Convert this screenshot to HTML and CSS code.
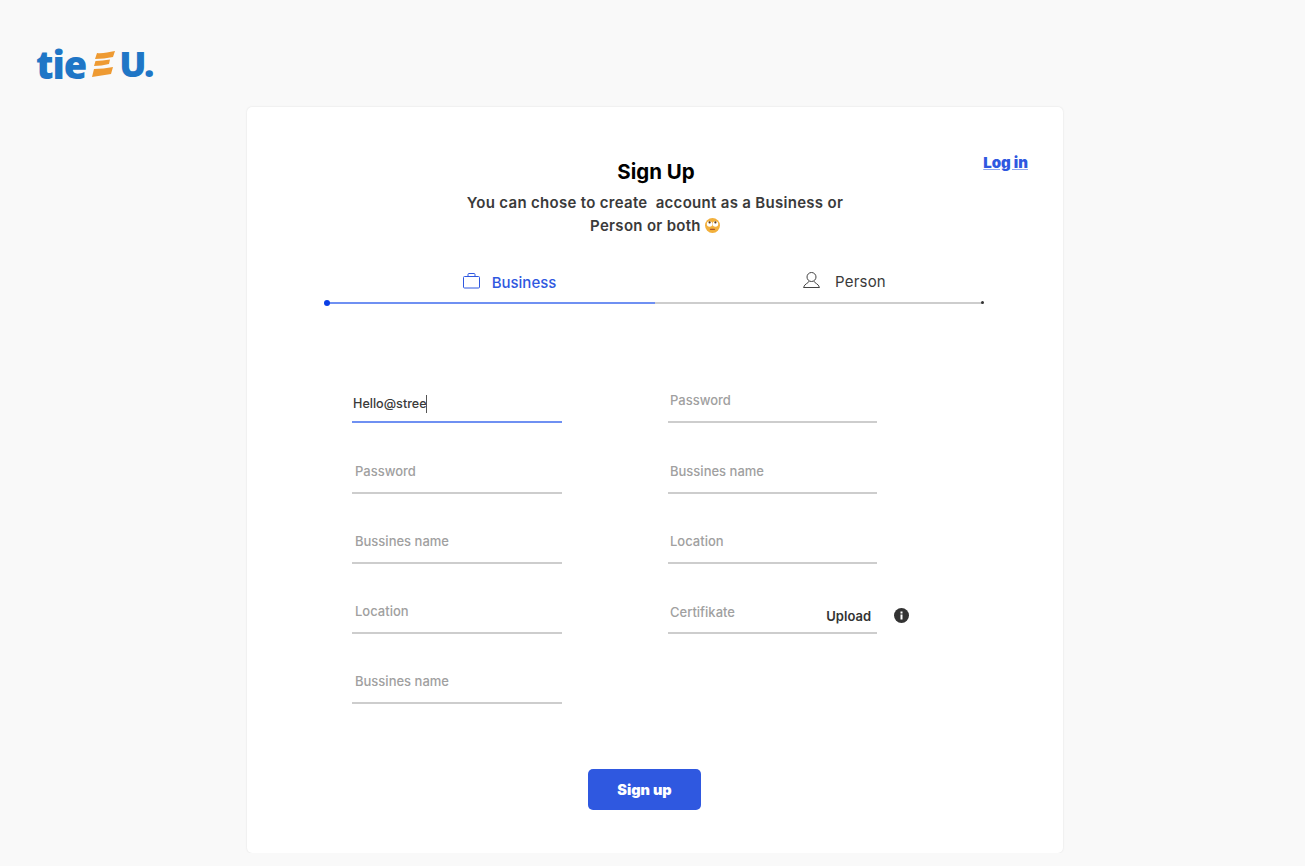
FILE: index.html
```html
<!DOCTYPE html>
<html lang="en">
<head>
    <meta charset="UTF-8">
    <meta name="viewport" content="width=device-width, initial-scale=1.0">
    <title>Sign Up</title>
    <link rel="stylesheet" href="styles.css">
</head>
<body>

<header class="site-header">
    <a class="logo" href="#">
        <span>tie</span>
        <svg class="logo-mark" width="23" height="26" viewBox="0 0 23 26">
            <path d="M5 2 C10 3 16 1 23 0 L21 6 C15 7 9 8 3 8 Z" fill="#ee9a32"/>
            <path d="M3.500 10 C8 10 13 9 18 8.500 L17 13 C12 14 7 15 2 15 Z" fill="#ee9a32"/>
            <path d="M2 18 C8 18 15 17 21 16 L19 23 C13 24 6 25 0 26 Z" fill="#ee9a32"/>
        </svg>
        <span class="logo-u">U.</span>
    </a>
</header>

<main class="card">
    <a class="login-link" href="#">Log in</a>

    <h1>Sign Up</h1>
    <p class="intro">
        You can chose to create&nbsp; account as a Business or<br>
        Person or both
        <svg class="emoji" width="15" height="15" viewBox="0 0 15 15">
            <circle cx="7.500" cy="7.500" r="7.500" fill="#f2b03c"/>
            <circle cx="4.600" cy="6" r="2.800" fill="#fff"/>
            <circle cx="10.400" cy="6" r="2.800" fill="#fff"/>
            <circle cx="4.600" cy="4.400" r="1.100" fill="#5a3a1a"/>
            <circle cx="10.400" cy="4.400" r="1.100" fill="#5a3a1a"/>
            <path d="M5.500 11.300 H9.500" stroke="#a8552a" stroke-width="1.200" stroke-linecap="round"/>
        </svg>
    </p>

    <div class="tabs">
        <div class="tab tab-active">
            <svg width="17" height="16" viewBox="0 0 17 16" fill="none" stroke="#2f58e0" stroke-width="1">
                <rect x="0.500" y="3.500" width="16" height="11.500" rx="1"/>
                <path d="M5 3.500 V1.500 Q5 0.500 6 0.500 H11 Q12 0.500 12 1.500 V3.500"/>
            </svg>
            <span>Business</span>
        </div>
        <div class="tab tab-person">
            <svg width="17" height="16" viewBox="0 0 17 16" fill="none" stroke="#444" stroke-width="1">
                <circle cx="8.500" cy="5" r="4.500"/>
                <path d="M6 9.200 C6 11 1.500 11.500 0.500 15.500 H16.500 C15.500 11.500 11 11 11 9.200"/>
            </svg>
            <span>Person</span>
        </div>
    </div>

    <form class="fields">
        <div class="field field-focus"><span class="value">Hello@stree</span><i class="caret"></i></div>
        <div class="field">Password</div>
        <div class="field">Password</div>
        <div class="field">Bussines name</div>
        <div class="field">Bussines name</div>
        <div class="field">Location</div>
        <div class="field">Location</div>
        <div class="field field-upload">
            Certifikate
            <span class="upload">Upload</span>
            <svg class="info" width="15" height="15" viewBox="0 0 15 15">
                <circle cx="7.500" cy="7.500" r="7.500" fill="#333"/>
                <rect x="6.500" y="6.500" width="2" height="5" fill="#fff"/>
                <rect x="6.500" y="3.500" width="2" height="2" fill="#fff"/>
            </svg>
        </div>
        <div class="field">Bussines name</div>
    </form>

    <div class="actions">
        <button class="signup-btn" type="button">Sign up</button>
    </div>
</main>

</body>
</html>
```

FILE: styles.css
```css
body {
    font-family: Inter, "Noto Sans", sans-serif;
    margin: 0;
    padding: 0;
    background-color: #f9f9f9;
    color: #3a3a3a;
}

.site-header {
    padding: 44px 36px 0;
    height: 63px;
}

.logo {
    display: inline-flex;
    align-items: center;
    gap: 6px;
    font-family: "Open Sans", sans-serif;
    font-size: 38px;
    font-weight: 800;
    line-height: 40px;
    letter-spacing: -1px;
    color: #1f76c6;
    text-decoration: none;
}

.logo-u {
    margin-left: -2px;
    font-size: 36px;
    letter-spacing: -2.500px;
}

.card {
    position: relative;
    width: 816px;
    height: 746px;
    margin-left: 247px;
    box-sizing: border-box;
    padding-top: 51px;
    background-color: #fff;
    border-radius: 5px;
    box-shadow: 0 0 2px rgba(0, 0, 0, 0.12);
}

.login-link {
    position: absolute;
    top: 46px;
    right: 35px;
    font-size: 15px;
    font-weight: 900;
    color: #2f58e0;
    text-decoration-color: #8ea6f0;
}

h1 {
    margin: 0;
    font-size: 20.500px;
    line-height: 28px;
    font-weight: 700;
    color: #000;
    text-align: center;
    padding-left: 2px;
}

.intro {
    margin: 5px 0 0;
    font-size: 15px;
    font-weight: 600;
    letter-spacing: 0.300px;
    line-height: 23px;
    text-align: center;
}

.emoji {
    vertical-align: -2px;
}

.tabs {
    display: grid;
    grid-template-columns: 328px 328px;
    margin: 26px 0 0 80px;
}

.tab {
    display: flex;
    justify-content: center;
    align-items: center;
    gap: 12px;
    height: 41px;
    box-sizing: border-box;
    padding: 0 0 0 37px;
    border-bottom: 2px solid #cdcdcd;
    font-size: 15px;
    position: relative;
}

.tab svg {
    margin-bottom: 3px;
}

.tab-person {
    gap: 15px;
    padding: 0 0 2px 51px;
    letter-spacing: 0.200px;
}

.tab-active {
    color: #2f58e0;
    border-bottom-color: #6f90f2;
    font-weight: 500;
}

.tab-active::after,
.tab-person::after {
    content: "";
    position: absolute;
    border-radius: 50%;
}

.tab-active::after {
    left: -3px;
    bottom: -4px;
    width: 6px;
    height: 6px;
    background-color: #0a3fe6;
}

.tab-person::after {
    right: -1px;
    bottom: -2px;
    width: 3px;
    height: 3px;
    background-color: #333;
}

.fields {
    display: grid;
    grid-template-columns: 210px 209px;
    grid-auto-rows: 70.300px;
    column-gap: 106px;
    margin: 49px 0 0 105px;
}

.field {
    position: relative;
    display: flex;
    align-items: flex-end;
    box-sizing: border-box;
    height: 70.300px;
    padding: 0 3px 12px;
    border-bottom: 2px solid #cdcdcd;
    font-size: 13px;
    font-weight: 500;
    line-height: 18px;
    color: #a0a0a0;
}

.field:nth-child(even) {
    padding-left: 2px;
}

.field-focus {
    padding-left: 1px;
    padding-bottom: 8px;
    border-bottom-color: #6f90f2;
    font-size: 12.600px;
    color: #3a3a3a;
}

.field-upload {
    padding-bottom: 11px;
}

.caret {
    width: 1px;
    height: 18px;
    margin-left: -1px;
    background-color: #555;
}

.upload {
    position: absolute;
    right: 6px;
    bottom: 7px;
    font-weight: 600;
    color: #333;
}

.info {
    position: absolute;
    right: -32px;
    bottom: 9px;
}

.actions {
    margin: 65px 0 0 341px;
}

.signup-btn {
    width: 113px;
    height: 41px;
    background-color: #2f58e0;
    color: #fff;
    border: none;
    border-radius: 5px;
    font-family: inherit;
    font-size: 14.500px;
    font-weight: 900;
}
```
